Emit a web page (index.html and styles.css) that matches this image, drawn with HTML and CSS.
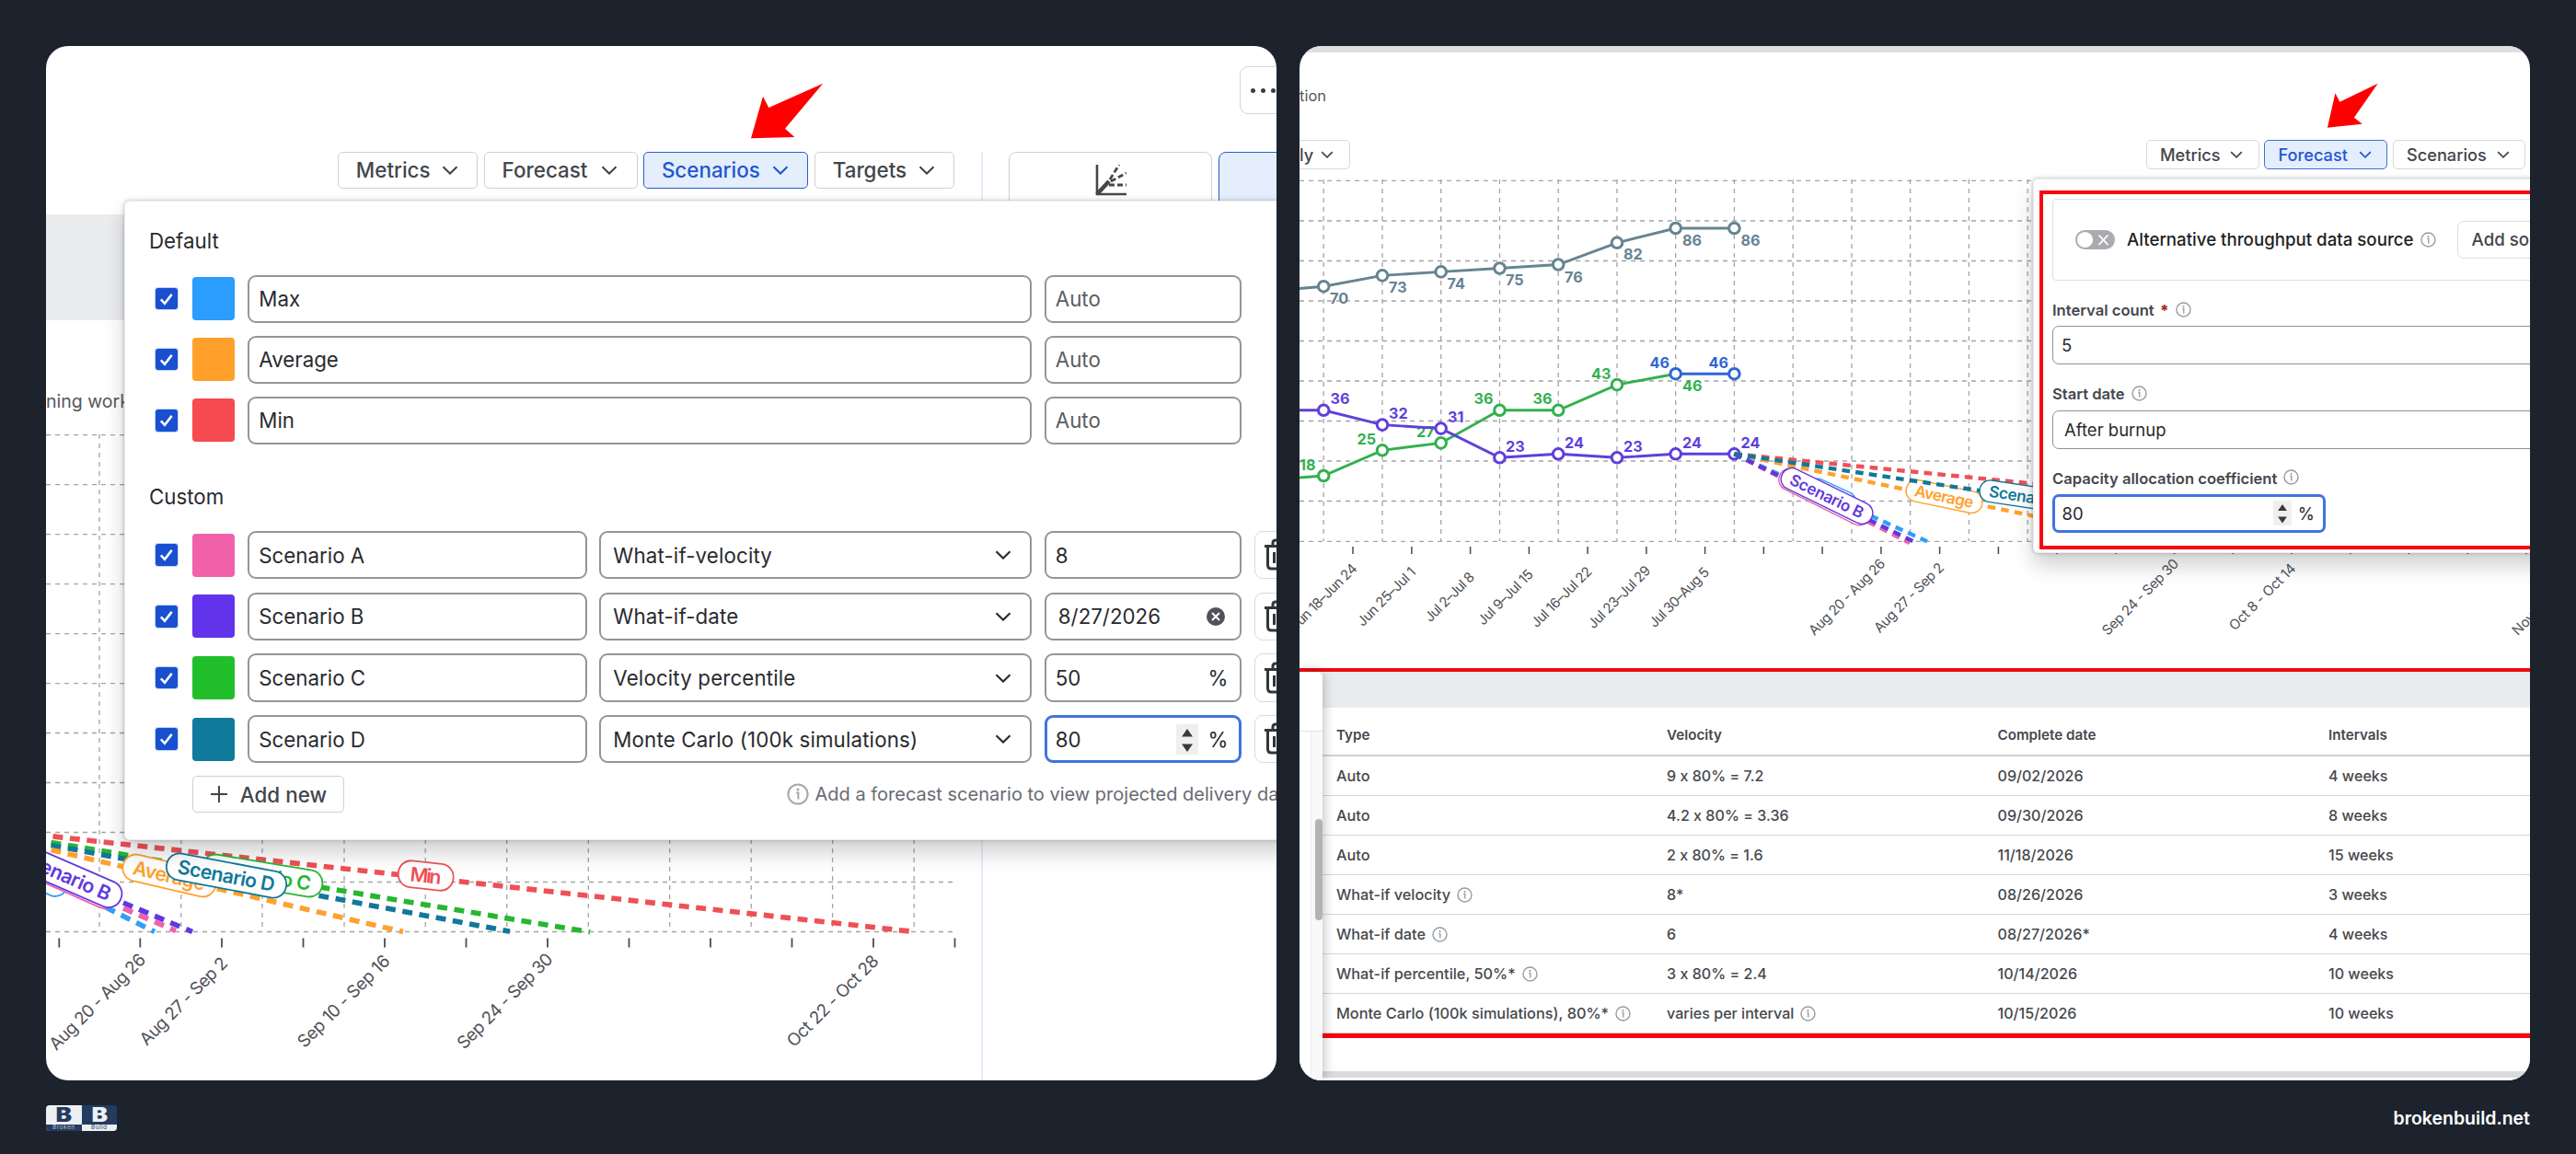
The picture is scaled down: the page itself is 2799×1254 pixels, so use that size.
FILE: index.html
```html
<!DOCTYPE html>
<html lang="en">
<head>
    <meta charset="UTF-8">
    <meta name="viewport" content="width=device-width, initial-scale=1.0">
    <title>Forecast scenarios</title>
    <link rel="stylesheet" href="styles.css">
</head>
<body>
    <!-- shared icons -->
    <svg class="sprite" aria-hidden="true">
        <symbol id="chevron" viewBox="0 0 18 10"><path d="M1.5 1.2 9 8.6l7.5-7.4" fill="none" stroke="currentColor" stroke-width="2.1"/></symbol>
        <symbol id="info" viewBox="0 0 24 24"><circle cx="12" cy="12" r="10.6" fill="none" stroke="currentColor" stroke-width="2"/><path d="M10.2 10.4H12.4V17.6" fill="none" stroke="currentColor" stroke-width="2"/><circle cx="12" cy="7" r="1.5" fill="currentColor"/></symbol>
        <symbol id="check" viewBox="0 0 24 24"><path d="m6 12.6 4.2 4.6L18 7" fill="none" stroke="#fff" stroke-width="2.6"/></symbol>
        <symbol id="trash" viewBox="0 0 32 36"><path d="M1 8.5h30M10 8V5q0-3 3-3h6q3 0 3 3v3M4.5 9v20q0 4 4 4h15q4 0 4-4V9M11.5 15v12M20.5 15v12" fill="none" stroke="currentColor" stroke-width="3"/></symbol>
        <symbol id="spinner" viewBox="0 0 24 33"><path d="M0 0h24v33H0z" fill="#efefef"/><path d="M12 5l6 8.5H6zM12 30l6-8.5H6z" fill="#3a3a3a"/></symbol>
    </svg>

    <main class="board">
        <section class="panel panel-left">
            <svg class="chart" viewBox="50 50 1337 1124">
                <path class="band" d="M50 233h90v115H50z"/>
                <path class="divider" d="M1067 165V1174"/>
                <path class="grid" d="M50 472.7H1038M50 526.7H1038M50 580.7H1038M50 634.7H1038M50 688.6H1038M50 742.6H1038M50 796.5H1038M50 850.5H1038M50 904.5H1038M50 958.5H1038M50 1012.5H1038"/>
                <path class="grid" d="M108 472V1012M196.8 472V1012M285 472V1012M374 472V1012M462.2 472V1012M550.7 472V1012M639.3 472V1012M727.7 472V1012M816.2 472V1012M904.6 472V1012M993.2 472V1012"/>
                <path class="tick" d="M64.3 1019.5v10M152.3 1019.5v10M241 1019.5v10M329.5 1019.5v10M418 1019.5v10M506.5 1019.5v10M595 1019.5v10M683.5 1019.5v10M772 1019.5v10M860.5 1019.5v10M949 1019.5v10M1037.5 1019.5v10"/>
                <text class="caption" x="50" y="442.5" font-size="19.5">ning work</text>

                <g class="forecast">
                    <path d="M57.5 908.9L995 1012.7" stroke="#ef5056"/>
                    <path d="M55.5 915.5L641 1012.8" stroke="#26b72f"/>
                    <path d="M55.5 918.4L554 1012.2" stroke="#11789b"/>
                    <path d="M55.5 923.6L438 1012.5" stroke="#ffa12e"/>
                    <path d="M134 987L191 1011.5" stroke="#f062ac"/>
                    <path d="M115 986L168 1012.5" stroke="#2f9ffa"/>
                    <path d="M134 981L209 1012.5" stroke="#6138e0"/>
                </g>
                <g class="pills">
                    <g transform="translate(462.7 951.5) rotate(6.3)" color="#ef5056"><rect x="-30" y="-14.5" width="60" height="29" rx="14"/><text y="7.6" textLength="34">Min</text></g>
                    <g transform="translate(184 951.5) rotate(13.1)" color="#ffa12e"><rect x="-51.5" y="-14.5" width="103" height="29" rx="14"/><text y="7.6" textLength="80">Average</text></g>
                    <g transform="translate(285 951.5) rotate(9.4)" color="#26b72f"><rect x="-66" y="-14.5" width="132" height="29" rx="14"/><text y="7.6" textLength="107">Scenario C</text></g>
                    <g transform="translate(246 951.5) rotate(10.7)" color="#11789b"><rect x="-66" y="-14.5" width="132" height="29" rx="14"/><text y="7.6" textLength="107">Scenario D</text></g>
                    <g transform="translate(44 951.5) rotate(26.4)" color="#2f9ffa"><rect x="-32" y="-14.5" width="64" height="29" rx="14"/></g>
                    <g transform="translate(66.5 951.5) rotate(24)" color="#f062ac"><rect x="-66" y="-14.5" width="132" height="29" rx="14"/></g>
                    <g transform="translate(70.5 951) rotate(23.4)" color="#6138e0"><rect x="-66" y="-14.5" width="132" height="29" rx="14"/><text y="7.6" textLength="107">Scenario B</text></g>
                </g>
                <g class="dates" font-size="18.8" transform="translate(-2.5 -2)">
                    <text transform="translate(162 1046) rotate(-45)" textLength="139">Aug 20 - Aug 26</text>
                    <text transform="translate(251 1050) rotate(-45)" textLength="126">Aug 27 - Sep 2</text>
                    <text transform="translate(427.5 1047.5) rotate(-45)" textLength="133">Sep 10 - Sep 16</text>
                    <text transform="translate(604.5 1045.5) rotate(-45)" textLength="138">Sep 24 - Sep 30</text>
                    <text transform="translate(958.5 1047.5) rotate(-45)" textLength="132">Oct 22 - Oct 28</text>
                </g>
                <path class="arrow" d="M894.2 90.7L835.3 117 829 104.7 816 150.3 863.4 149 853 139.7z"/>
            </svg>

            <header class="topbar">
                <div class="more"><i></i><i></i><i></i></div>
            </header>
            <nav class="toolbar">
                <div class="btn w152">Metrics<svg><use href="#chevron"/></svg></div>
                <div class="btn w166">Forecast<svg><use href="#chevron"/></svg></div>
                <div class="btn w179 active">Scenarios<svg><use href="#chevron"/></svg></div>
                <div class="btn w152">Targets<svg><use href="#chevron"/></svg></div>
                <div class="tab">
                    <svg viewBox="0 0 34 34"><path d="M2 0V32H34" fill="none" stroke="#45474b" stroke-width="2.6"/><path d="M2 32 15 18" stroke="#45474b" stroke-width="4.5"/><path d="M16 16 26 0M17 18 34 9M15 22H34" fill="none" stroke="#45474b" stroke-width="2.8" stroke-dasharray="6 3"/></svg>
                </div>
                <div class="tab active"></div>
            </nav>

            <div class="popover scenarios">
                <h3>Default</h3>
                <div class="rows">
                    <div class="row"><svg class="check"><use href="#check"/></svg><span class="swatch blue"></span><div class="field wide">Max</div><div class="field value auto">Auto</div></div>
                    <div class="row"><svg class="check"><use href="#check"/></svg><span class="swatch orange"></span><div class="field wide">Average</div><div class="field value auto">Auto</div></div>
                    <div class="row"><svg class="check"><use href="#check"/></svg><span class="swatch red"></span><div class="field wide">Min</div><div class="field value auto">Auto</div></div>
                </div>
                <h3 class="second">Custom</h3>
                <div class="rows custom">
                    <div class="row">
                        <svg class="check"><use href="#check"/></svg><span class="swatch pink"></span>
                        <div class="field name">Scenario A</div>
                        <div class="field select">What-if-velocity<svg><use href="#chevron"/></svg></div>
                        <div class="field value">8</div>
                        <div class="trash"><svg><use href="#trash"/></svg></div>
                    </div>
                    <div class="row">
                        <svg class="check"><use href="#check"/></svg><span class="swatch purple"></span>
                        <div class="field name">Scenario B</div>
                        <div class="field select">What-if-date<svg><use href="#chevron"/></svg></div>
                        <div class="field value date">8/27/2026<svg class="clear" viewBox="0 0 20 20"><circle cx="10" cy="10" r="10" fill="#505258"/><path d="m6 6 8 8M14 6l-8 8" stroke="#fff" stroke-width="2"/></svg></div>
                        <div class="trash"><svg><use href="#trash"/></svg></div>
                    </div>
                    <div class="row">
                        <svg class="check"><use href="#check"/></svg><span class="swatch green"></span>
                        <div class="field name">Scenario C</div>
                        <div class="field select">Velocity percentile<svg><use href="#chevron"/></svg></div>
                        <div class="field value">50<span class="unit">%</span></div>
                        <div class="trash"><svg><use href="#trash"/></svg></div>
                    </div>
                    <div class="row">
                        <svg class="check"><use href="#check"/></svg><span class="swatch teal"></span>
                        <div class="field name">Scenario D</div>
                        <div class="field select">Monte Carlo (100k simulations)<svg><use href="#chevron"/></svg></div>
                        <div class="field value focus">80<svg class="spin"><use href="#spinner"/></svg><span class="unit">%</span></div>
                        <div class="trash"><svg><use href="#trash"/></svg></div>
                    </div>
                </div>
                <div class="popover-footer">
                    <div class="btn add"><svg viewBox="0 0 18 18"><path d="M9 0v18M0 9h18" stroke="currentColor" stroke-width="2"/></svg>Add new</div>
                    <p class="hint"><svg><use href="#info"/></svg>Add a forecast scenario to view projected delivery dates</p>
                </div>
            </div>
        </section>

        <section class="panel panel-right">
            <svg class="chart" viewBox="1412 50 1337 1124">
                <text class="caption" x="1412" y="109.5" font-size="16.5">tion</text>
                <path class="grid" d="M1412 196.3H2749M1412 240H2749M1412 283.5H2749M1412 327H2749M1412 370.5H2749M1412 414H2749M1412 457.5H2749M1412 501H2749M1412 544.5H2749M1412 588.3H2749"/>
                <path class="grid" d="M1438.2 195V588M1502 195V588M1565.7 195V588M1629.5 195V588M1693.2 195V588M1757 195V588M1820.7 195V588M1884.4 195V588M1948.2 195V588M2012 195V588M2075.6 195V588M2139.4 195V588M2203.2 195V588"/>
                <path class="tick thin" d="M1470 594v8M1533.9 594v8M1597.6 594v8M1661.4 594v8M1725.1 594v8M1788.9 594v8M1852.6 594v8M1916.4 594v8M1980.1 594v8M2043.9 594v8M2107.6 594v8M2171.4 594v8M2235.1 594v8M2298.9 594v8M2362.6 594v8M2426.4 594v8M2490.1 594v8M2553.9 594v8M2617.6 594v8M2681.4 594v8M2745.1 594v8"/>

                <g class="series" color="#668392">
                    <path d="M1412 313.5L1438.2 311.2 1502 299.4 1565.7 295.4 1629.5 291.5 1693.2 287.5 1757 263.8 1820.7 248 1884.4 248"/>
                    <circle cx="1438.2" cy="311.2" r="5.8"/><circle cx="1502" cy="299.4" r="5.8"/><circle cx="1565.7" cy="295.4" r="5.8"/><circle cx="1629.5" cy="291.5" r="5.8"/><circle cx="1693.2" cy="287.5" r="5.8"/><circle cx="1757" cy="263.8" r="5.8"/><circle cx="1820.7" cy="248" r="5.8"/><circle cx="1884.4" cy="248" r="5.8"/>
                    <text x="1445" y="329.7">70</text><text x="1509" y="317.7">73</text><text x="1572.5" y="313.7">74</text><text x="1636" y="310">75</text><text x="1700" y="306.5">76</text><text x="1764" y="282">82</text><text x="1828" y="267">86</text><text x="1891.5" y="267">86</text>
                </g>
                <g class="series" color="#34b04d">
                    <path d="M1412 519L1438.2 517 1502 489.3 1565.7 481.4 1629.5 445.8 1693.2 445.8 1757 418.1 1820.7 406.2"/>
                    <circle cx="1438.2" cy="517" r="5.8"/><circle cx="1502" cy="489.3" r="5.8"/><circle cx="1565.7" cy="481.4" r="5.8"/><circle cx="1629.5" cy="445.8" r="5.8"/><circle cx="1693.2" cy="445.8" r="5.8"/><circle cx="1757" cy="418.1" r="5.8"/>
                    <text x="1412" y="510.7">18</text><text x="1474.5" y="483">25</text><text x="1539" y="475.3">27</text><text x="1601.5" y="439.3">36</text><text x="1665.5" y="439.3">36</text><text x="1729" y="412">43</text><text x="1828" y="424.5">46</text>
                </g>
                <g class="series" color="#2f66d6">
                    <path d="M1820.7 406.2H1884.4"/>
                    <circle cx="1820.7" cy="406.2" r="5.8"/><circle cx="1884.4" cy="406.2" r="5.8"/>
                    <text x="1792.5" y="399.5">46</text><text x="1856.5" y="399.5">46</text>
                </g>
                <g class="series" color="#5f3fdc">
                    <path d="M1412 445.8L1438.2 445.8 1502 461.6 1565.7 465.6 1629.5 497.3 1693.2 493.3 1757 497.3 1820.7 493.3 1884.4 493.3"/>
                    <circle cx="1438.2" cy="445.8" r="5.8"/><circle cx="1502" cy="461.6" r="5.8"/><circle cx="1565.7" cy="465.6" r="5.8"/><circle cx="1629.5" cy="497.3" r="5.8"/><circle cx="1693.2" cy="493.3" r="5.8"/><circle cx="1757" cy="497.3" r="5.8"/><circle cx="1820.7" cy="493.3" r="5.8"/><circle cx="1884.4" cy="493.3" r="5.8"/>
                    <text x="1445.5" y="439.3">36</text><text x="1509" y="455">32</text><text x="1573" y="459">31</text><text x="1636" y="490.5">23</text><text x="1700" y="486.5">24</text><text x="1764" y="490.5">23</text><text x="1828" y="486.5">24</text><text x="1891.5" y="486.5">24</text>
                </g>

                <g class="forecast small">
                    <path d="M1884.4 493.3L2841 588.3" stroke="#ef5056"/>
                    <path d="M1884.4 493.3L2343 588.3" stroke="#ffa12e"/>
                    <path d="M1884.4 493.3L2094 588.3" stroke="#2f9ffa"/>
                    <path d="M1884.4 493.3L2075 590" stroke="#f062ac"/>
                    <path d="M1884.4 493.3L2079 588.3" stroke="#6138e0"/>
                </g>
                <g class="pills small">
                    <g transform="translate(1990 539) rotate(24.6)" color="#2f9ffa"><rect x="-28" y="-11.8" width="56" height="23.6" rx="11.5"/></g>
                    <g transform="translate(1982.5 540) rotate(26.5)" color="#f062ac"><rect x="-54" y="-11.8" width="108" height="23.6" rx="11.5"/></g>
                    <g transform="translate(1985 539) rotate(26)" color="#6138e0"><rect x="-54" y="-11.8" width="108" height="23.6" rx="11.5"/><text y="6.2" textLength="87">Scenario B</text></g>
                    <g transform="translate(2112.5 539.5) rotate(11.7)" color="#ffa12e"><rect x="-42" y="-11.8" width="84" height="23.6" rx="11.5"/><text y="6.2" textLength="65">Average</text></g>
                </g>
                <g class="forecast small"><path d="M1884.4 493.3L2160 534.5" stroke="#11789b"/></g>
                <g class="pills small">
                    <g transform="translate(2204.5 540) rotate(8.5)" color="#11789b"><rect x="-54" y="-11.8" width="108" height="23.6" rx="11.5"/><text y="6.2" textLength="87">Scenario D</text></g>
                </g>
                <g class="dates" font-size="15" transform="translate(-2.5 -2)">
                    <text transform="translate(1478 620.7) rotate(-45)" textLength="95">Jun 18–Jun 24</text>
                    <text transform="translate(1541.9 624.7) rotate(-45)" textLength="83">Jun 25–Jul 1</text>
                    <text transform="translate(1605.6 630) rotate(-45)" textLength="69">Jul 2–Jul 8</text>
                    <text transform="translate(1669.4 627) rotate(-45)" textLength="78">Jul 9–Jul 15</text>
                    <text transform="translate(1733.1 624) rotate(-45)" textLength="86">Jul 16–Jul 22</text>
                    <text transform="translate(1796.9 623) rotate(-45)" textLength="89">Jul 23–Jul 29</text>
                    <text transform="translate(1860.6 624.7) rotate(-45)" textLength="85">Jul 30–Aug 5</text>
                    <text transform="translate(2051.9 615.5) rotate(-45)" textLength="110">Aug 20 - Aug 26</text>
                    <text transform="translate(2115.6 619.7) rotate(-45)" textLength="100">Aug 27 - Sep 2</text>
                    <text transform="translate(2370.6 615.5) rotate(-45)" textLength="110">Sep 24 - Sep 30</text>
                    <text transform="translate(2497.9 620.7) rotate(-45)" textLength="95">Oct 8 - Oct 14</text>
                    <text transform="translate(2816 615.5) rotate(-45)" textLength="110">Nov 12 - Nov 18</text>
                </g>
                <path class="arrow" d="M2583.7 90.7L2542.3 110.7 2537.4 101.3 2528.9 138.7 2566.8 134.7 2557.9 127.7z"/>
            </svg>

            <div class="edge"></div>
            <nav class="toolbar small">
                <div class="btn period">ly<svg><use href="#chevron"/></svg></div>
                <div class="btn w123">Metrics<svg><use href="#chevron"/></svg></div>
                <div class="btn w134 active">Forecast<svg><use href="#chevron"/></svg></div>
                <div class="btn w144">Scenarios<svg><use href="#chevron"/></svg></div>
            </nav>

            <div class="popover forecast-form">
                <div class="highlight">
                    <div class="source">
                        <svg class="toggle" viewBox="0 0 43 21"><rect width="43" height="21" rx="10.5" fill="#a9abaf"/><circle cx="10.5" cy="10.5" r="8.6" fill="#fff"/><path d="m25.5 5.5 10 10.5M35.5 5.5l-10 10.5" stroke="#fff" stroke-width="1.8"/></svg>
                        <span>Alternative throughput data source</span>
                        <svg class="info"><use href="#info"/></svg>
                        <div class="add-source">Add source</div>
                    </div>
                    <label>Interval count <b>*</b><svg class="info"><use href="#info"/></svg></label>
                    <div class="input">5</div>
                    <label>Start date<svg class="info"><use href="#info"/></svg></label>
                    <div class="input picker">After burnup</div>
                    <label>Capacity allocation coefficient<svg class="info"><use href="#info"/></svg></label>
                    <div class="input focus">80<svg class="spin"><use href="#spinner"/></svg><span class="unit">%</span></div>
                </div>
            </div>

            <div class="results">
                <aside class="side"><div class="side-top"></div><div class="scroll"><div class="thumb"></div></div></aside>
                <div class="sheet">
                    <div class="strip"></div>
                    <table>
                        <thead>
                            <tr><th>Type</th><th>Velocity</th><th>Complete date</th><th>Intervals</th></tr>
                        </thead>
                        <tbody>
                            <tr><td>Auto</td><td>9 x 80% = 7.2</td><td>09/02/2026</td><td>4 weeks</td></tr>
                            <tr><td>Auto</td><td>4.2 x 80% = 3.36</td><td>09/30/2026</td><td>8 weeks</td></tr>
                            <tr><td>Auto</td><td>2 x 80% = 1.6</td><td>11/18/2026</td><td>15 weeks</td></tr>
                            <tr><td>What-if velocity<svg class="info"><use href="#info"/></svg></td><td>8*</td><td>08/26/2026</td><td>3 weeks</td></tr>
                            <tr><td>What-if date<svg class="info"><use href="#info"/></svg></td><td>6</td><td>08/27/2026*</td><td>4 weeks</td></tr>
                            <tr><td>What-if percentile, 50%*<svg class="info"><use href="#info"/></svg></td><td>3 x 80% = 2.4</td><td>10/14/2026</td><td>10 weeks</td></tr>
                            <tr><td>Monte Carlo (100k simulations), 80%*<svg class="info"><use href="#info"/></svg></td><td>varies per interval<svg class="info"><use href="#info"/></svg></td><td>10/15/2026</td><td>10 weeks</td></tr>
                        </tbody>
                    </table>
                    <div class="bottom-edge"></div>
                </div>
            </div>
        </section>
    </main>

    <footer class="footer">
        <div class="logo">
            <div class="half"><b>B</b><small>Broken</small></div>
            <div class="half dark"><b>B</b><small>Build</small></div>
        </div>
        <div class="site">brokenbuild.net</div>
    </footer>
</body>
</html>
```

FILE: styles.css
```css
* {
    margin: 0;
    padding: 0;
    box-sizing: border-box;
}

body {
    width: 2799px;
    height: 1254px;
    overflow: hidden;
    background: #1d232d;
    font-family: Inter, "Liberation Sans", sans-serif;
    font-feature-settings: "calt" 0;
    color: #292a2e;
}

svg {
    display: block;
    flex: none;
}

.sprite {
    display: none;
}

.board {
    display: flex;
    gap: 25px;
    padding: 50px 50px 0;
}

.panel {
    position: relative;
    width: 1337px;
    height: 1123.5px;
    flex: none;
    overflow: hidden;
    border-radius: 24px;
    background: #fff;
}

/* charts */
.chart {
    position: absolute;
    left: 0;
    top: 0;
    width: 1337px;
    height: 1124px;
}

.band {
    fill: #ebecee;
}

.divider {
    stroke: #dbe7f8;
    stroke-width: 1.5;
}

.grid {
    fill: none;
    stroke: #a4a4a7;
    stroke-width: 1.3;
    stroke-dasharray: 5 5;
}

.tick {
    stroke: #4b4c50;
    stroke-width: 1.8;
}

.tick.thin {
    stroke-width: 1.5;
}

.caption {
    fill: #55575c;
}

.forecast path {
    fill: none;
    stroke-width: 5.6;
    stroke-dasharray: 10.9 7.6;
}

.forecast.small path {
    stroke-width: 4.4;
    stroke-dasharray: 8.6 6.2;
}

.pills rect {
    fill: #fff;
    stroke: currentColor;
    stroke-width: 1.8;
}

.pills text {
    fill: currentColor;
    font-size: 21.3px;
    font-weight: 600;
    text-anchor: middle;
}

.pills.small text {
    font-size: 17.2px;
}

.pills.small rect {
    stroke-width: 1.4;
}

.dates text {
    fill: #505258;
    text-anchor: end;
}

.series path {
    fill: none;
    stroke: currentColor;
    stroke-width: 2.9;
}

.series circle {
    fill: #fff;
    stroke: currentColor;
    stroke-width: 3;
}

.series text {
    fill: currentColor;
    font-size: 16.2px;
    font-weight: 700;
}

.arrow {
    fill: #ff0000;
}

/* top bars */
.topbar {
    position: relative;
    height: 115px;
    padding: 22px 0 0 1297px;
}

.more {
    display: flex;
    align-items: center;
    gap: 6.2px;
    width: 60px;
    height: 52px;
    padding-left: 11px;
    border: 1.5px solid #d5d6d9;
    border-radius: 9px;
}

.more i {
    width: 5px;
    height: 5px;
    flex: none;
    border-radius: 50%;
    background: #3b3d42;
}

.toolbar {
    position: relative;
    display: flex;
    gap: 6.8px;
    width: 1500px;
    height: 60px;
    padding-left: 317.3px;
}

.btn {
    display: flex;
    align-items: center;
    justify-content: space-between;
    height: 39.5px;
    flex: none;
    padding: 0 20.5px 0 18.5px;
    border: 1.5px solid #cfd0d4;
    border-radius: 5px;
    font-size: 22.4px;
    font-weight: 500;
    white-space: nowrap;
    color: #43454a;
}

.btn svg {
    width: 18px;
    height: 10px;
}

.btn.active {
    border-color: #2a5dc8;
    background: #e4eefd;
    color: #1f57cf;
}

.w152 { width: 152px; }
.w166 { width: 166.5px; }
.w179 { width: 179px; }
.w123 { width: 123px; }
.w134 { width: 134px; }
.w144 { width: 144.5px; }

.tab {
    display: flex;
    justify-content: center;
    width: 221px;
    height: 70px;
    flex: none;
    padding-top: 13px;
    border: 1.5px solid #cfd0d4;
    border-radius: 8px;
}

.btn + .tab {
    margin-left: 52.5px;
}

.tab.active {
    border-color: #2a5dc8;
    background: #e4eefd;
}

.tab svg {
    width: 34px;
    height: 34px;
}

.edge {
    position: relative;
    height: 7px;
    background: #dedfde;
}

.toolbar.small {
    gap: 5.5px;
    height: 32px;
    margin-top: 94.5px;
    padding-left: 0;
}

.toolbar.small .btn {
    height: 32.5px;
    padding: 0 16.5px 0 14.5px;
    font-size: 18.2px;
    border-color: #d8d9dc;
}

.toolbar.small .btn.active {
    border-color: #3f70d4;
}

.toolbar.small .btn svg {
    width: 14px;
    height: 8px;
}

.toolbar.small .period {
    width: 54.5px;
    margin-right: 859.5px;
    padding-left: 0;
    border-left: 0;
    border-radius: 0 5px 5px 0;
}

/* dropdowns */
.popover {
    position: absolute;
    background: #fff;
    border: 1px solid #ececee;
    box-shadow: 0 14px 22px rgba(30, 31, 33, 0.2), 0 0 4px rgba(30, 31, 33, 0.3);
}

.scenarios {
    left: 85px;
    top: 168px;
    width: 1400px;
    height: 695px;
    padding: 30.5px 0 0 26px;
    border-radius: 6px;
}

.scenarios h3 {
    height: 24px;
    margin-bottom: 25px;
    font-size: 22.3px;
    font-weight: 400;
    line-height: 24px;
}

.scenarios h3.second {
    margin-top: 45px;
}

.rows {
    display: flex;
    flex-direction: column;
    gap: 13.8px;
    padding-left: 7px;
}

.rows.custom {
    gap: 14.4px;
}

.row {
    display: flex;
    align-items: center;
    height: 52.3px;
}

.check {
    width: 23.5px;
    height: 23.5px;
    margin-right: 16.3px;
    border-radius: 3px;
    background: #1850d0;
    box-shadow: 0 0 0 1px #c4d5f7;
}

.swatch {
    width: 46px;
    height: 47px;
    margin-right: 14.5px;
    flex: none;
    border-radius: 4px;
}

.blue { background: #2a9dff; }
.orange { background: #ffa02a; }
.red { background: #f54b51; }
.pink { background: #f161aa; }
.purple { background: #6134eb; }
.green { background: #22bf2d; }
.teal { background: #107a9c; }

.field {
    display: flex;
    align-items: center;
    height: 52.3px;
    flex: none;
    margin-right: 13.5px;
    padding: 0 10px;
    border: 2px solid #93959a;
    border-radius: 9px;
    font-size: 22.3px;
    white-space: nowrap;
}

.wide { width: 852px; }
.name { width: 368.5px; }
.value { width: 214.5px; }
.auto { color: #5b5d63; }

.select {
    width: 470px;
    padding: 0 20px 0 13px;
    justify-content: space-between;
    letter-spacing: 0.15px;
}

.select svg {
    width: 18px;
    height: 10px;
}

.date {
    padding: 0 16px 0 13px;
    justify-content: space-between;
}

.clear {
    width: 20px;
    height: 20px;
}

.unit {
    margin-left: auto;
}

.value .unit {
    padding-right: 3px;
}

.focus {
    border: 3px solid #3f74e0;
}

.value.focus {
    padding: 0 9px;
}

.spin {
    width: 24px;
    height: 33px;
    margin-left: 103px;
}

.trash {
    display: flex;
    align-items: center;
    width: 54px;
    height: 52.3px;
    flex: none;
    padding-left: 9px;
    border: 1.5px solid #d8d9dc;
    border-radius: 9px;
    color: #333539;
}

.trash svg {
    width: 32px;
    height: 36px;
}

.popover-footer {
    display: flex;
    align-items: center;
    margin-top: 14px;
    padding-left: 47px;
}

.add {
    width: 165px;
    padding: 0 18px 0 19px;
}

.btn.add svg {
    width: 18px;
    height: 18px;
}

.hint {
    display: flex;
    align-items: center;
    gap: 7px;
    margin-left: 480.5px;
    font-size: 20px;
    white-space: nowrap;
    color: #686b72;
}

.hint svg {
    width: 24px;
    height: 24px;
    color: #a6a8ad;
}

.forecast-form {
    left: 797px;
    top: 144px;
    width: 700px;
    height: 407px;
    padding: 12px 0 0 6px;
    border-radius: 5px;
}

.highlight {
    height: 390px;
    padding: 5px 0 0 10px;
    border: 4.5px solid #fb0410;
}

.source {
    display: flex;
    align-items: center;
    height: 89px;
    padding-left: 23.5px;
    border: 1.5px solid #dddee1;
    border-radius: 4px;
    font-size: 18.7px;
    font-weight: 500;
    white-space: nowrap;
    color: #1e1f21;
}

.toggle {
    width: 43px;
    height: 21px;
    margin-right: 13.5px;
}

.info {
    width: 17px;
    height: 17px;
    margin-left: 7px;
    color: #9a9ca2;
}

.add-source {
    height: 41.5px;
    width: 130px;
    margin-left: 23px;
    padding-left: 15px;
    border: 1.5px solid #dddee1;
    border-radius: 7px;
    line-height: 39px;
    color: #43454a;
}

.highlight label {
    display: flex;
    align-items: center;
    height: 49.3px;
    padding-top: 15px;
    font-size: 16.6px;
    font-weight: 600;
    white-space: nowrap;
    color: #45474c;
}

.highlight label b {
    margin-left: 6px;
    color: #ae2e24;
}

.highlight label .info {
    margin-top: -2px;
}

.input {
    display: flex;
    align-items: center;
    height: 42px;
    padding: 0 9px;
    border: 1.5px solid #8f9197;
    border-radius: 7px;
    font-size: 18.5px;
}

.picker {
    padding-left: 12px;
}

.input.focus {
    width: 297px;
    padding: 0 9px 0 7.5px;
    border: 3px solid #3f74e0;
}

.input .spin {
    width: 20px;
    height: 27px;
    margin-left: 206px;
}

/* results table */
.results {
    position: absolute;
    left: 0;
    top: 675.5px;
    display: flex;
    width: 1337px;
    height: 448.5px;
    border-top: 4.5px solid #f00a0e;
    background: #fff;
}

.side {
    position: relative;
    width: 25px;
    flex: none;
    border-top-right-radius: 7px;
    background: #fff;
    box-shadow: 0 0 14px rgba(30, 31, 33, 0.35);
}

.side-top {
    height: 65px;
    border-bottom: 1.5px solid #e3e4e6;
}

.scroll {
    height: 380px;
    margin-left: 12px;
    padding: 95px 0 0 4px;
    border-left: 1px solid #ededee;
    background: #f8f8f8;
}

.thumb {
    width: 8px;
    height: 110px;
    border-radius: 4px;
    background: #b2b3b4;
}

.sheet {
    width: 1312px;
    flex: none;
}

.strip {
    height: 39px;
    background: #ebecee;
}

table {
    width: 1312px;
    table-layout: fixed;
    border-collapse: separate;
    border-spacing: 0;
    border-bottom: 5px solid #fb0410;
}

th, td {
    width: 359.5px;
    height: 43.1px;
    text-align: left;
    vertical-align: middle;
    white-space: nowrap;
    border-bottom: 1.5px solid #d6d7da;
    font-size: 16.1px;
    font-weight: 500;
    color: #46484d;
}

th:first-child, td:first-child {
    width: 374px;
    padding-left: 15px;
}

td:first-child {
    font-size: 16.3px;
}

th:last-child, td:last-child {
    width: 219px;
}

th {
    height: 53px;
    padding-top: 9px;
    border-bottom: 2.5px solid #d0d1d4;
    font-size: 15.2px;
    font-weight: 600;
}

td .info {
    display: inline-block;
    margin-left: 7px;
    vertical-align: -3px;
}

.bottom-edge {
    height: 7px;
    margin-top: 36px;
    background: #dadcdb;
}

/* footer */
.footer {
    display: flex;
    align-items: center;
    justify-content: space-between;
    height: 80px;
    padding: 3px 50px 0;
}

.logo {
    display: flex;
    width: 77px;
    height: 28px;
    overflow: hidden;
    border-radius: 4px;
}

.half {
    width: 38.5px;
    background: #edeff3;
    color: #233b5e;
    text-align: center;
}

.half b {
    display: block;
    height: 21px;
    font-size: 21px;
    font-weight: 900;
    line-height: 22px;
    transform: scaleX(1.25);
}

.half small {
    display: block;
    height: 7px;
    font-size: 6.5px;
    line-height: 7px;
    letter-spacing: 0.5px;
    background: #233b5e;
    color: #b9c3d3;
}

.half.dark {
    background: #233b5e;
    color: #edeff3;
}

.half.dark small {
    background: #edeff3;
    color: #233b5e;
}

.site {
    font-size: 19.5px;
    font-weight: 600;
    color: #fff;
}
```
